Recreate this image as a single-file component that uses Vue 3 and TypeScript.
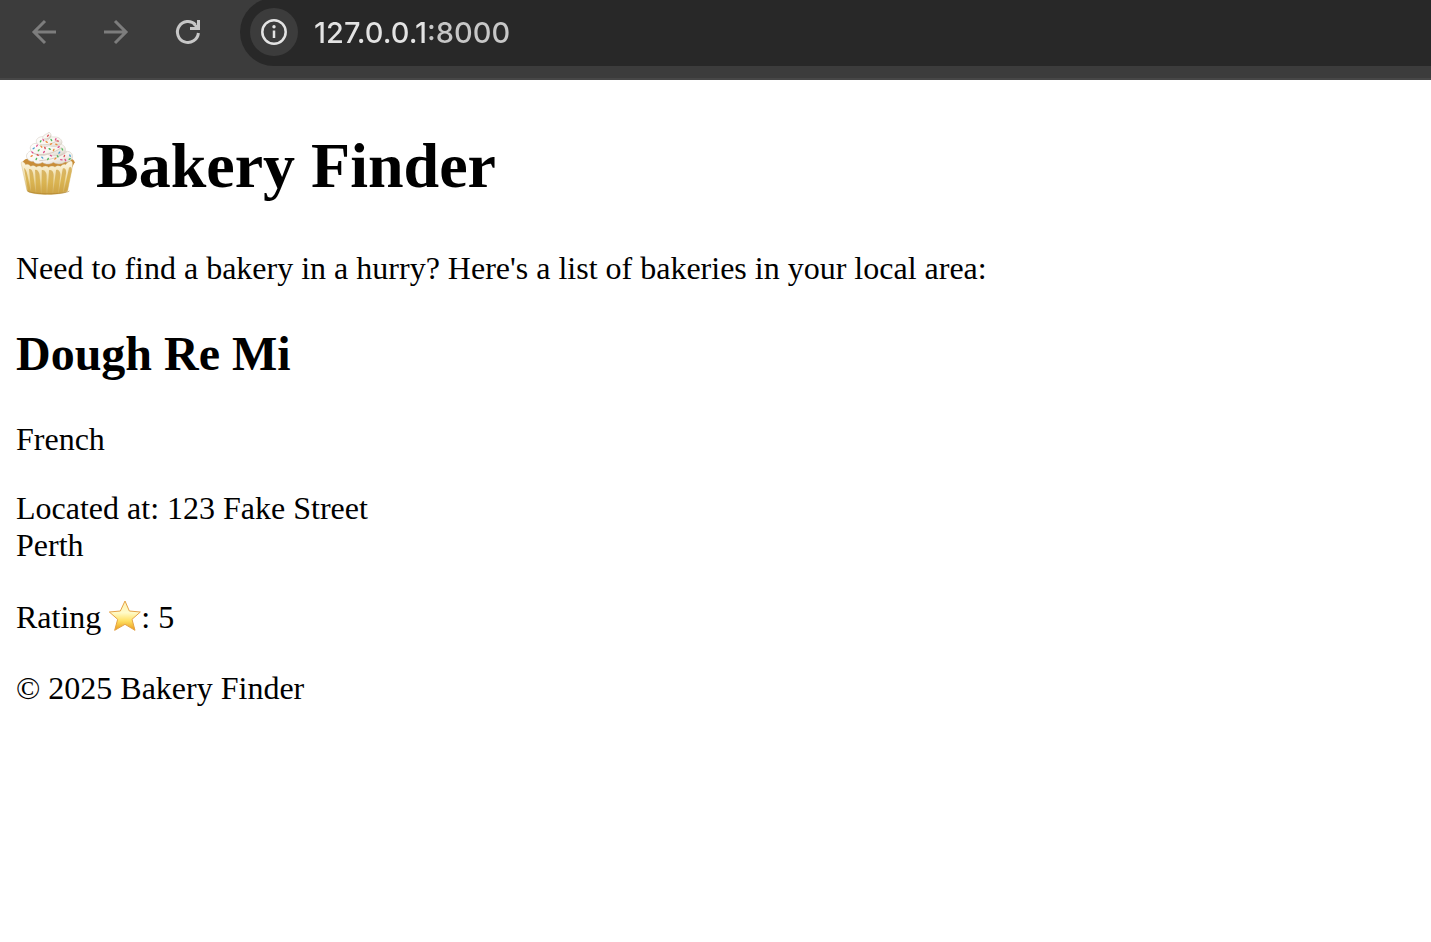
<script setup lang="ts">
import { ref } from 'vue'

interface Bakery {
  name: string
  cuisine: string
  street: string
  city: string
  rating: number
}

interface Sprinkle {
  x: number
  y: number
  angle: number
  color: string
}

const address = ref('127.0.0.1:8000')

const bakeries: Bakery[] = [
  { name: 'Dough Re Mi', cuisine: 'French', street: '123 Fake Street', city: 'Perth', rating: 5 },
]

const pink = '#e0508c'
const green = '#4fb95a'
const blue = '#4a9fd0'
const orange = '#ee8d3c'
const red = '#d94a52'

const sprinkles: Sprinkle[] = [
  { x: 114, y: 47, angle: -50, color: red },
  { x: 100, y: 60, angle: 70, color: pink },
  { x: 92, y: 64, angle: -60, color: green },
  { x: 110, y: 66, angle: 30, color: orange },
  { x: 124, y: 60, angle: 60, color: green },
  { x: 137, y: 58, angle: -70, color: pink },
  { x: 143, y: 63, angle: 15, color: red },
  { x: 123, y: 72, angle: -25, color: orange },
  { x: 139, y: 73, angle: 20, color: orange },
  { x: 81, y: 77, angle: -60, color: pink },
  { x: 71, y: 85, angle: -35, color: blue },
  { x: 94, y: 80, angle: 50, color: orange },
  { x: 105, y: 84, angle: 75, color: red },
  { x: 86, y: 91, angle: -50, color: green },
  { x: 102, y: 96, angle: -50, color: pink },
  { x: 119, y: 87, angle: 35, color: green },
  { x: 131, y: 90, angle: -65, color: orange },
  { x: 146, y: 81, angle: -35, color: pink },
  { x: 157, y: 88, angle: 65, color: green },
  { x: 148, y: 98, angle: -55, color: blue },
  { x: 67, y: 97, angle: 45, color: pink },
  { x: 65, y: 108, angle: -30, color: orange },
  { x: 83, y: 105, angle: 25, color: red },
  { x: 79, y: 117, angle: -65, color: green },
  { x: 97, y: 113, angle: 45, color: blue },
  { x: 114, y: 117, angle: -60, color: green },
  { x: 123, y: 107, angle: 30, color: pink },
  { x: 136, y: 116, angle: -40, color: orange },
  { x: 143, y: 109, angle: 60, color: green },
  { x: 154, y: 119, angle: 10, color: pink },
  { x: 163, y: 108, angle: -70, color: red },
  { x: 166, y: 120, angle: 65, color: pink },
  { x: 180, y: 107, angle: 70, color: blue },
  { x: 179, y: 117, angle: -35, color: green },
]
</script>

<template>
  <div class="window">
    <header class="toolbar">
      <nav class="nav" aria-label="Browser navigation">
        <button class="nav-button muted" type="button" aria-label="Back">
          <svg viewBox="0 0 24 24"><path d="M24 12H2M13 1 2 12l11 11" /></svg>
        </button>
        <button class="nav-button muted" type="button" aria-label="Forward">
          <svg viewBox="0 0 24 24"><path d="M0 12h22M11 1l11 11-11 11" /></svg>
        </button>
        <button class="nav-button" type="button" aria-label="Reload">
          <svg viewBox="0 0 24 24">
            <path d="M22.400 13A10.500 10.500 0 1 1 19.500 4.700" />
            <path class="solid" d="M21 0h3v10H14V7h5l-2-2 1.500-2L21 5z" />
          </svg>
        </button>
      </nav>
      <form class="omnibox" @submit.prevent>
        <button class="site-info" type="button" aria-label="View site information">
          <svg viewBox="0 0 26 26">
            <circle cx="13" cy="13" r="11.700" />
            <circle class="dot" cx="13" cy="7.800" r="1.700" />
            <path d="M13 11.500v7.500" />
          </svg>
        </button>
        <input v-model="address" class="address" type="text" aria-label="Address" spellcheck="false" />
      </form>
    </header>

    <main class="page">
      <h1>
        <svg class="cupcake" viewBox="18 36 192 192" role="img" aria-label="Cupcake">
          <defs>
            <linearGradient id="paper" x1="0" x2="0" y1="0" y2="1">
              <stop offset="0" stop-color="#fdf7e6" />
              <stop offset=".5" stop-color="#efdda6" />
              <stop offset="1" stop-color="#cda64c" />
            </linearGradient>
            <linearGradient id="panel" x1="0" x2="0" y1="0" y2="1">
              <stop offset="0" stop-color="#d9b566" />
              <stop offset=".5" stop-color="#dab452" />
              <stop offset="1" stop-color="#cda345" />
            </linearGradient>
            <linearGradient id="cream" x1="0" x2="1" y1="0" y2="1">
              <stop offset="0" stop-color="#ffffff" />
              <stop offset=".6" stop-color="#f7f4ef" />
              <stop offset="1" stop-color="#d8d0c5" />
            </linearGradient>
          </defs>
          <path fill="#c98d38" d="M38 126c3-7 12-10 20-11h120c8 1 15 5 16 12l-10 20H48z" />
          <path
            fill="url(#paper)"
            stroke="#c9ac6c"
            stroke-width="1"
            d="M34 127c4-5 10 1 13 7 6-3 11-1 15 5 6-4 12-3 17 2 6-4 12-4 17 1 7-5 14-5 20 0 6-5 13-5 19-1 5-5 12-5 17-2 5-6 10-8 15-5 5-7 13-13 18-10 4 3 3 12 2 18l-14 70c-9 15-112 15-122 0L36 142c-1-5-3-11-2-15z"
          />
          <g fill="url(#panel)">
            <path d="M42 144c4 2 8 9 10 20l11 53-9-5z" />
            <path d="M57 148c6-4 12 6 13 17l7 55-13-2z" />
            <path d="M75 150c7-4 13 7 14 17l4 55-14-2z" />
            <path d="M95 151c8-4 15 7 15 17l-1 55-14-1z" />
            <path d="M117 151c8-4 15 6 14 17l-4 55-15-1z" />
            <path d="M138 150c7-4 14 5 13 16l-7 54-15 2z" />
            <path d="M158 146c6-4 12 3 10 15l-10 56-12 3z" />
            <path d="M177 143c5-5 10 0 8 11l-13 57-11 5z" />
          </g>
          <path fill="none" stroke="#ae802d" stroke-width="3" stroke-opacity=".6" d="M53 213c15 11 110 11 125 0" />
          <g fill="url(#cream)" stroke="#cfc5b9" stroke-width="1.500">
            <path d="M50 112c-3-9 6-19 17-20l106 2c10 1 17 10 14 20-3 9-12 14-22 12-11 8-25 7-35 1-9 7-24 7-33 0-11 8-24 3-27-3-9 2-18-4-20-12z" />
            <path d="M61 87c-2-10 7-17 17-17l72 2c12 2 20 13 15 23-6 12-32 16-53 8-16 9-48 2-51-16z" />
            <path d="M79 65c-1-9 9-15 18-15l39 1c11 0 21 9 20 17-2 11-25 14-39 9-13 6-36 1-38-12z" />
            <path d="M98 55c0-8 7-13 15-14l3-5c5 2 8 7 7 12-1 7-9 13-16 13-5 0-9-2-9-6z" />
          </g>
          <path
            fill="none"
            stroke="#c8bcad"
            stroke-linecap="round"
            stroke-width="2"
            d="M104 57c8 1 16-3 18-9M92 74c18 3 37-4 48-11M68 99c29 12 66 0 86-16M89 122c33-2 62-12 80-25"
          />
          <rect
            v-for="(sprinkle, index) in sprinkles"
            :key="index"
            :x="sprinkle.x - 4"
            :y="sprinkle.y - 2"
            width="8"
            height="4"
            rx="2"
            :fill="sprinkle.color"
            :transform="`rotate(${sprinkle.angle} ${sprinkle.x} ${sprinkle.y})`"
          />
        </svg>
        Bakery Finder
      </h1>
      <p>Need to find a bakery in a hurry? Here's a list of bakeries in your local area:</p>

      <article v-for="bakery in bakeries" :key="bakery.name">
        <h2>{{ bakery.name }}</h2>
        <p>{{ bakery.cuisine }}</p>
        <p>Located at: {{ bakery.street }}<br />{{ bakery.city }}</p>
        <p class="rating">
          Rating
          <svg class="star" viewBox="27 30 96 96" role="img" aria-label="Star">
            <defs>
              <linearGradient id="gold" x1="0" x2="0" y1="0" y2="1">
                <stop offset="0" stop-color="#fff0b0" />
                <stop offset=".4" stop-color="#fffbc9" />
                <stop offset=".68" stop-color="#ffe062" />
                <stop offset="1" stop-color="#e99a18" />
              </linearGradient>
            </defs>
            <path
              fill="url(#gold)"
              stroke="#e5a246"
              stroke-linejoin="round"
              stroke-width="3"
              d="M75 33l13 30 33 3-25 22 9 33-30-18-31 18 9-33-25-22 33-3z"
            /></svg>: {{ bakery.rating }}
        </p>
      </article>

      <footer>
        <p>© 2025 Bakery Finder</p>
      </footer>
    </main>
  </div>
</template>

<style>
body {
  margin: 0;
  background: #fff;
}
</style>

<style scoped>
.window {
  min-height: 100vh;
  color: #000;
  background: #fff;
  font-family: "Liberation Serif", "Times New Roman", serif;
  font-size: 32px;
  line-height: 37px;
}

.toolbar {
  display: flex;
  align-items: flex-start;
  box-sizing: border-box;
  height: 80px;
  overflow: hidden;
  background: #3c3c3c;
  border-bottom: 2px solid #474747;
}

.nav {
  display: flex;
  gap: 24px;
  padding: 8px 28px 0 20px;
}

.nav-button {
  display: grid;
  place-items: center;
  width: 48px;
  height: 48px;
  padding: 0;
  color: #c7c7c7;
  background: none;
  border: 0;
  border-radius: 50%;
}

.nav-button.muted {
  color: #7d7d7d;
}

.nav-button svg {
  width: 24px;
  height: 24px;
  overflow: visible;
  fill: none;
  stroke: currentColor;
  stroke-width: 3;
}

.nav-button .solid {
  fill: currentColor;
  stroke: none;
}

.omnibox {
  display: flex;
  flex: 1;
  align-items: center;
  gap: 16px;
  height: 68px;
  margin-top: -2px;
  padding-left: 10px;
  box-sizing: border-box;
  background: #282828;
  border-radius: 34px 0 0 34px;
}

.site-info {
  display: grid;
  flex: none;
  place-items: center;
  width: 48px;
  height: 48px;
  padding: 0;
  color: #e3e3e3;
  background: #3c3c3c;
  border: 0;
  border-radius: 50%;
}

.site-info svg {
  width: 26px;
  height: 26px;
  fill: none;
  stroke: currentColor;
  stroke-width: 2.5;
}

.site-info .dot {
  fill: currentColor;
  stroke: none;
}

.address {
  flex: 1;
  min-width: 0;
  height: 40px;
  padding: 0;
  color: transparent;
  background: linear-gradient(90deg, #e3e3e3 113px, #c7c7c7 113px);
  background-clip: text;
  border: 0;
  outline: 0;
  font-family: Inter, Roboto, sans-serif;
  font-size: 29px;
  font-weight: 500;
}

.page {
  padding: 45px 16px 0;
}

h1 {
  margin: 0 0 43px;
  font-size: 64px;
  line-height: 82px;
}

h2 {
  margin: 39px 0 40px;
  font-size: 48px;
  line-height: 55px;
}

p {
  margin: 32px 0;
}

.rating {
  line-height: 42px;
}

.cupcake {
  width: 64px;
  height: 64px;
  vertical-align: -9px;
}

.star {
  width: 32px;
  height: 32px;
  vertical-align: -4px;
}
</style>
